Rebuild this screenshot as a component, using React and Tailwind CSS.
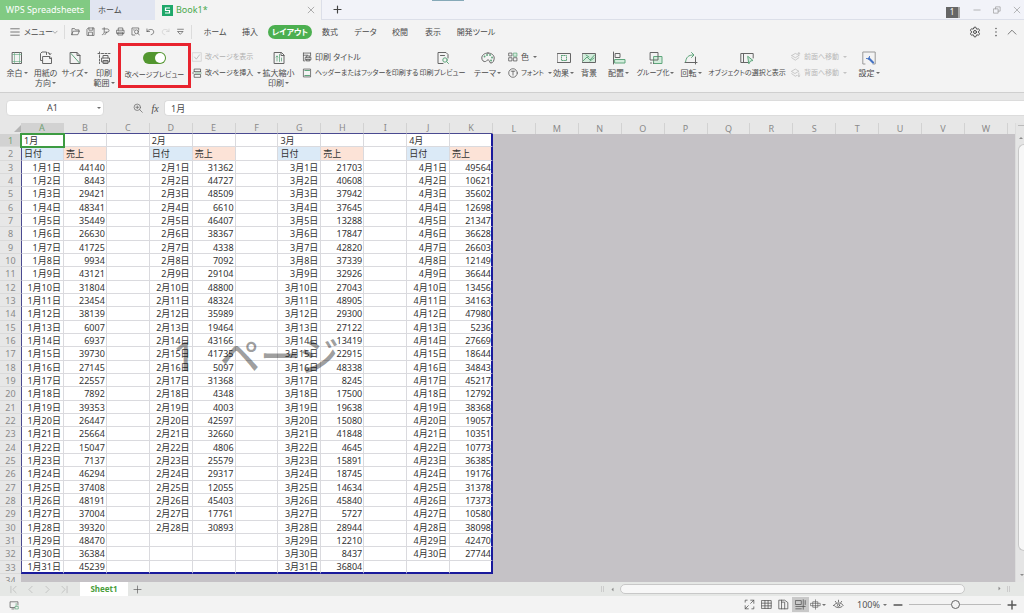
import React from 'react';
import { Settings } from 'lucide-react';

const COLUMNS = 'ABCDEFGHIJKLMNOPQRSTUVW'.split('');

const MONTHS = [
  {
    name: '1月',
    sales: [
      44140, 8443, 29421, 48341, 35449, 26630, 41725, 9934, 43121, 31804, 23454, 38139, 6007, 6937, 39730, 27145,
      22557, 7892, 39353, 26447, 25664, 15047, 7137, 46294, 37408, 48191, 37004, 39320, 48470, 36384, 45239,
    ],
  },
  {
    name: '2月',
    sales: [
      31362, 44727, 48509, 6610, 46407, 38367, 4338, 7092, 29104, 48800, 48324, 35989, 19464, 43166, 41735, 5097,
      31368, 4348, 4003, 42597, 32660, 4806, 25579, 29317, 12055, 45403, 17761, 30893,
    ],
  },
  {
    name: '3月',
    sales: [
      21703, 40608, 37942, 37645, 13288, 17847, 42820, 37339, 32926, 27043, 48905, 29300, 27122, 13419, 22915, 48338,
      8245, 17500, 19638, 15080, 41848, 4645, 15891, 18745, 14634, 45840, 5727, 28944, 12210, 8437, 36804,
    ],
  },
  {
    name: '4月',
    sales: [
      49564, 10621, 35602, 12698, 21347, 36628, 26603, 12149, 36644, 13456, 34163, 47980, 5236, 27669, 18644, 34843,
      45217, 12792, 38368, 19057, 10351, 10773, 36385, 19176, 31378, 17373, 10580, 38098, 42470, 27744,
    ],
  },
];

const cellAt = (row, col) => {
  const month = MONTHS[Math.floor(col / 3)];
  const part = col % 3;
  if (part === 2) return '';
  if (row === 0) return part === 0 ? month.name : '';
  if (row === 1) return part === 0 ? '日付' : '売上';
  const value = month.sales[row - 2];
  if (value === undefined) return '';
  return part === 0 ? `${month.name}${row - 1}日` : value;
};

const Icon = ({ children, className = 'size-[14px] text-[#666]' }) => (
  <svg
    className={`shrink-0 ${className}`}
    viewBox="0 0 14 14"
    fill="none"
    stroke="currentColor"
    strokeLinecap="round"
    strokeLinejoin="round"
    aria-hidden="true"
  >
    {children}
  </svg>
);

const GREEN = '#5fa67c';
const MINT = '#d3ecdc';

const icons = {
  margins: (
    <>
      <path d="M2.5 1.5h9v11h-9z" />
      <path d="M4.5 1.5v11M9.5 1.5v11M2.5 3.5h9M2.5 10.5h9" stroke={GREEN} strokeWidth=".6" />
    </>
  ),
  orientation: (
    <>
      <path d="M3.5 9.5h-2v-7l1.500-1.500h4.500v2.500M9 1.500q2 0 2 2M10 2.500l1 1 1-1" />
      <path d="M4 5.500h7l1.500 1.500v5.500H4zM10.500 5.500v2h2" fill="#f3f3f3" />
    </>
  ),
  size: (
    <>
      <path d="M2.500 1.500h6.500l3 3v8H2.500zM9 1.500v3h3" />
      <path d="M3 2.500l8.500 9.500" stroke={GREEN} />
    </>
  ),
  printArea: (
    <>
      <path d="M2.500 1v11.500M1 2.500h12" strokeDasharray="2 1.500" />
      <path d="M6 7V4.500h5V7M5 7h7.500v4H5zM6.500 9.500h4.500v3H6.500z" fill="#f3f3f3" />
    </>
  ),
  scale: (
    <>
      <path d="M2.500 1.500h7l2.500 2.500v8.500H2.500zM9 1.500v3h3" />
      <path d="M5 5v5M7.500 3.500v7M9.500 7v3M4 6l1-1 1 1" stroke={GREEN} strokeWidth=".8" />
    </>
  ),
  titles: (
    <>
      <path d="M2 1.500h10M2 1.500v11h2M2 4.500h6M12 1.500v4" />
      <path d="M6 7.500V5.500h5v2M5 7.500h7.500v3.500H5zM6.500 10h4.500v2.500H6.500z" fill="#f3f3f3" />
    </>
  ),
  headerFooter: (
    <>
      <path d="M2.500 1.500h9.500v11H2.500z" />
      <path d="M4 3.500h6.500M4 10.500h6.500" stroke={GREEN} strokeWidth="1.600" />
    </>
  ),
  preview: (
    <>
      <path d="M12 7V3.500l-2-2H2v11h5M4.500 4.500h4" />
      <circle cx="9" cy="9" r="2.200" stroke={GREEN} />
      <path d="M10.700 10.700l1.800 1.800" stroke={GREEN} />
    </>
  ),
  theme: (
    <>
      <path d="M7 2C3 2 .8 4.500.8 7s2 4 3.700 3.500S6 8.500 7.500 9s.5 3 2.500 3 3.200-2.500 3.200-5S11 2 7 2z" />
      <path d="M3.500 5.500h.1M6 4h.1M9 4h.1M11 6.500h.1M10 9.500h.1" stroke={GREEN} strokeWidth="1.800" />
    </>
  ),
  colors: (
    <>
      <path d="M1.500 1.500h4v4h-4zM1.500 8h4v4.500h-4zM8 8h4.500v4.500H8z" />
      <path d="M8 1.500h4.500v4.500H8z" fill={MINT} stroke={GREEN} />
    </>
  ),
  fonts: (
    <>
      <circle cx="7" cy="7" r="6" />
      <path d="M4.500 4.500h5M7 4.500v5.500" />
    </>
  ),
  effects: (
    <>
      <path d="M.5 2.500h13v9H.5z" />
      <path d="M4.500 4.500h5v5h-5z" stroke={GREEN} strokeDasharray="1 1.200" />
    </>
  ),
  background: (
    <>
      <path d="M.5 2.500h13v9H.5z" fill={MINT} />
      <path d="M1 10l4-4 3 3 4.500-5M4 4l3 2M8 10l4-3" stroke={GREEN} />
    </>
  ),
  align: (
    <>
      <path d="M1.500 1v12M3.500 2.500h4.500v4H3.500z" />
      <path d="M3 8.500h10v3.500H3z" fill={MINT} stroke={GREEN} />
    </>
  ),
  group: (
    <>
      <path d="M5 5.500h8v7H5z" fill={MINT} stroke={GREEN} />
      <path d="M1.500 1.500h7.500v7.500H1.500z" />
      <path d="M1.500 12h1M4.500 12v.5" />
    </>
  ),
  rotate: (
    <>
      <path d="M1.500 11.500C2 6 4.500 4 9 4M7.500 1.500L10 4 7.500 6.500" stroke={GREEN} />
      <path d="M1 11.500h12M11.500 6v7" />
    </>
  ),
  selectPane: (
    <>
      <path d="M8 11.500H.8v-9h12.400V7M3.500 2.500v9" />
      <path d="M8 5.500l5 4-2.500.5L9 12.500z" fill={MINT} stroke={GREEN} />
    </>
  ),
  forward: (
    <path d="M1 5l5-3 3 1.500M1 5l5 3 5-3M1 8l5 3.500L11 8M11 1v4M9.500 2.500L11 1l1.500 1.500" />
  ),
  backward: (
    <path d="M1 4.500l5-3 5 3-5 3zM1 8l5 3.500 2-1M11 7v5M9.500 10.500L11 12l1.500-1.500" />
  ),
  settings: (
    <>
      <path d="M3 13H.8V1h12.400v12H11" stroke="#999" />
      <path d="M7 7.500l4 4" stroke="#4573c4" strokeWidth="2.200" />
      <path d="M4.500 7.500l2.500.5.5-2.500" stroke="#4573c4" />
    </>
  ),
  breaks: (
    <>
      <path d="M3 5V1.500h9V5M3 5h9M3 12.500V9h9v3.500zM.8 7h1.500" />
      <path d="M4.500 7H13" stroke={GREEN} />
    </>
  ),
  open: <path d="M1.500 12V2.500h4L7 4.500h5.500v2M1.500 12h9l2.500-5.500H4z" />,
  save: <path d="M1.500 12.500v-9l2-2h9v11zM4.500 1.500v3.500h6V1.500M4 12.500V8h6v4.500" />,
  exportPdf: <path d="M2 3h7.500c4 0 4 5 0 5H6M5 1v7c0 4-3 4-3 4M9 8l-3 4" />,
  print: <path d="M3.500 5V1.500h7V5M1.500 5h11v5h-11zM3.500 8h7v4.500h-7z" />,
  printPreview: (
    <>
      <path d="M12 5V1.500H1.500v11H6M4 4.500h1" />
      <circle cx="8.500" cy="7.500" r="3" />
      <path d="M10.700 9.700l2.300 2.800" />
    </>
  ),
  undo: <path d="M1.500 3v4h4M1.500 7C4 2.500 12.500 2.500 12 8c-.3 2.500-2 3.500-4 4" />,
  redo: <path d="M12.500 3v4h-4M12.500 7C10 2.500 1.500 2.500 2 8c.3 2.500 2 3.500 4 4" />,
  more: <path d="M2.500 3.500h9M3 7h8l-4 4z" />,
  hamburger: <path d="M1 2.500h12M1 7h12M1 11.500h12" />,
  chevronDown: <path d="M2 5l5 5 5-5" />,
  chevronUp: <path d="M1.500 10L7 4.500l5.500 5.500" />,
  dots: <path d="M7 2v.1M7 7v.1M7 12v.1" strokeWidth="2" />,
  close: <path d="M2 2l10 10M12 2L2 12" />,
  plus: <path d="M7 1.500v11M1.500 7h11" />,
  minus: <path d="M1.500 7h11" />,
  restore: <path d="M1.500 5h7.500v7.500H1.500zM4.500 5V1.500h8V9H9" />,
  lens: (
    <>
      <circle cx="6" cy="6" r="4.500" />
      <path d="M9.500 9.500l3.500 3.500M4 6h4M6 4v4" />
    </>
  ),
  first: <path d="M3 2v10M11 2L6 7l5 5" />,
  prev: <path d="M9.500 2l-5 5 5 5" />,
  next: <path d="M4.500 2l5 5-5 5" />,
  last: <path d="M11 2v10M3 2l5 5-5 5" />,
  fullscreen: <path d="M8.500 1.500h4v4M12.500 1.500l-4 4M5.500 12.500h-4v-4M1.500 12.500l4-4M1.500 4V1.500H4M12.500 10v2.500H10" />,
  gridView: <path d="M1 2h12v10H1zM1 5.300h12M1 8.700h12M5 2v10M9 2v10" />,
  pageView: <path d="M1.500 1.500h7l4 3v8h-11zM4.500 1.500v11M4.500 4h4v8.500" />,
  breakView: <path d="M1 2h7v5H1zM10.500 1v12M1 9.500h12M1 12.500h7M13 2v5" />,
  target: <path d="M4 3.500h6v7H4zM1 5.500h12v3H1zM7 1v12" strokeWidth=".8" />,
  eye: (
    <>
      <path d="M1 8c3-4 9-4 12 0-3 4-9 4-12 0zM3 3l1 1.500M7 1.500v2M11 3l-1 1.500" />
      <circle cx="7" cy="8" r="1.500" />
    </>
  ),
  record: (
    <>
      <path d="M8 10.500H1.500v-8h11V7M4 12.500h3" />
      <path d="M9 9h4v3.500H9zM10 5v3" stroke={GREEN} />
    </>
  ),
};

const Caret = () => (
  <svg className="ml-px size-[4px] shrink-0 opacity-80" viewBox="0 0 4 4" fill="currentColor" aria-hidden="true">
    <path d="M0 1h4L2 3z" />
  </svg>
);

const BigButton = ({ icon, lines, caret, width, size = 'text-[8px]' }) => (
  <button className={`flex shrink-0 flex-col items-center gap-[3px] pt-[8px] ${width} ${size}`}>
    <Icon>{icons[icon]}</Icon>
    <span className="flex flex-col items-center">
      {lines.map((line, i) => (
        <span key={line} className="flex items-center leading-[10px] whitespace-nowrap">
          {line}
          {caret && i === lines.length - 1 && <Caret />}
        </span>
      ))}
    </span>
  </button>
);

const SmallButton = ({ icon, label, caret, disabled, size = 'text-[8px]' }) => (
  <button
    disabled={disabled}
    className={`flex h-[16px] items-center gap-[3px] whitespace-nowrap disabled:text-[#b8b8b8] ${size}`}
  >
    <Icon className="size-[10px]">{icons[icon]}</Icon>
    <span>{label}</span>
    {caret && <Caret />}
  </button>
);

const TitleBar = () => (
  <header className="relative flex h-[20px] shrink-0 border-b border-[#dcdfe9] bg-[#f2f3f9]">
    <div className="absolute top-0 left-[432px] h-px w-[32px] bg-[#86a9b8]" />
    <button className="h-[20px] w-[90px] bg-[#81ca83] text-[9px] text-white">WPS Spreadsheets</button>
    <button className="h-[20px] w-[65px] bg-[#e1e5f1] pl-[8px] text-left text-[8px] text-[#444]">ホーム</button>
    <div className="flex h-[20px] w-[167px] items-center border-r border-[#dcdfe9] bg-[#f3f3f3] pr-[6px] pl-[7px]">
      <svg className="size-[11px]" viewBox="0 0 11 11" fill="none" aria-hidden="true">
        <path d="M0 0h11v11H0z" fill="#1fa86a" />
        <path d="M8 3H3.500v2.500h4V8H3" stroke="#fff" strokeWidth="1.200" />
      </svg>
      <span className="ml-[3px] flex-1 text-[9px] text-[#4aa84d]">Book1*</span>
      <button aria-label="閉じる" className="text-[#777]">
        <Icon className="size-[8px]">{icons.close}</Icon>
      </button>
    </div>
    <button aria-label="新しいタブ" className="ml-[11px] text-[#444]">
      <Icon className="size-[9px]">
        <g strokeWidth="1.800">{icons.plus}</g>
      </Icon>
    </button>
    <div className="ml-auto flex items-center pr-[3px] text-[#888]">
      <span className="mt-[5px] flex h-[11px] w-[14px] items-center justify-center border-r-2 border-[#aaa] bg-[#666] text-[8px] text-white">
        1
      </span>
      <button aria-label="最小化" className="ml-[13px]">
        <Icon className="size-[8px]">{icons.minus}</Icon>
      </button>
      <button aria-label="元に戻す" className="ml-[12px]">
        <Icon className="size-[8px]">{icons.restore}</Icon>
      </button>
      <button aria-label="ウィンドウを閉じる" className="ml-[12px]">
        <Icon className="size-[8px]">{icons.close}</Icon>
      </button>
    </div>
  </header>
);

const QUICK = ['open', 'save', 'exportPdf', 'print', 'printPreview', 'undo', 'redo', 'more'];

const TABS = [
  { label: 'ホーム', width: 'w-[34px]' },
  { label: '挿入', width: 'w-[36px]' },
  { label: 'レイアウト', width: 'w-[44px]', active: true },
  { label: '数式', width: 'w-[36px]' },
  { label: 'データ', width: 'w-[35px]' },
  { label: '校閲', width: 'w-[34px]' },
  { label: '表示', width: 'w-[32px]' },
  { label: '開発ツール', width: 'w-[54px]' },
];

const MenuBar = () => (
  <nav className="flex h-[23px] shrink-0 items-center pl-[10px] text-[8px]">
    <button className="flex items-center whitespace-nowrap">
      <Icon className="size-[10px]">{icons.hamburger}</Icon>
      <span className="ml-[4px] w-[28px] text-left">メニュー</span>
      <Icon className="size-[6px]">{icons.chevronDown}</Icon>
    </button>
    <div className="ml-[6px] h-[14px] w-px bg-[#dcdcdc]" />
    <div className="ml-[6px] flex gap-[6px]">
      {QUICK.map((name) => (
        <button key={name} aria-label={name} className={name === 'redo' ? 'text-[#ccc]' : ''}>
          <Icon className="size-[9px]">{icons[name]}</Icon>
        </button>
      ))}
    </div>
    <div className="ml-[6px] h-[14px] w-px bg-[#dcdcdc]" />
    <div className="ml-[6px] flex items-center">
      {TABS.map(({ label, width, active }) => (
        <button
          key={label}
          className={`h-[14px] shrink-0 rounded-full leading-[14px] whitespace-nowrap ${width} ${
            active ? 'bg-[#4caf50] font-bold text-white' : ''
          }`}
        >
          {label}
        </button>
      ))}
    </div>
    <div className="ml-auto flex items-center pr-[7px]">
      <button aria-label="設定">
        <Settings className="size-[12px]" />
      </button>
      <button aria-label="その他" className="ml-[10px]">
        <Icon className="size-[10px]">{icons.dots}</Icon>
      </button>
      <button aria-label="リボンを折りたたむ" className="ml-[6px]">
        <Icon className="size-[10px]">{icons.chevronUp}</Icon>
      </button>
    </div>
  </nav>
);

const Ribbon = () => (
  <div className="flex h-[50px] shrink-0 border-b border-[#cfcfcf] pl-[3px]">
    <BigButton icon="margins" lines={['余白']} caret width="w-[28px]" />
    <BigButton icon="orientation" lines={['用紙の', '方向']} caret width="w-[29px]" />
    <BigButton icon="size" lines={['サイズ']} caret width="w-[30px]" />
    <BigButton icon="printArea" lines={['印刷', '範囲']} caret width="w-[28px]" />
    <label className="flex h-[45px] w-[73px] shrink-0 flex-col items-center gap-[6px] border-[3px] border-[#e8232e] pt-[6px] text-[7px] whitespace-nowrap">
      <input type="checkbox" defaultChecked className="sr-only" />
      <span className="flex h-[12px] w-[23px] justify-end rounded-full bg-[#52962f] p-px">
        <span className="size-[10px] rounded-full bg-white" />
      </span>
      <span className="leading-[10px]">改ページプレビュー</span>
    </label>
    <div className="flex w-[71px] shrink-0 flex-col pt-[6px] pl-px">
      <label className="flex h-[16px] items-center gap-[3px] text-[7px] whitespace-nowrap text-[#b0b0b0]">
        <input type="checkbox" disabled defaultChecked className="sr-only" />
        <Icon className="size-[10px]">
          <path d="M1 1h12v12H1z" stroke="#ccc" />
          <path d="M3.500 7l2.500 3 4.500-6" stroke="#aaa" />
        </Icon>
        改ページを表示
      </label>
      <SmallButton icon="breaks" label="改ページを挿入" caret size="text-[7px]" />
    </div>
    <BigButton icon="scale" lines={['拡大縮小', '印刷']} caret width="w-[33px]" />
    <div className="ml-[7px] w-[116px] shrink-0 pt-[6px]">
      <SmallButton icon="titles" label="印刷 タイトル" />
      <SmallButton icon="headerFooter" label="ヘッダーまたはフッターを印刷する" size="text-[7px]" />
    </div>
    <BigButton icon="preview" lines={['印刷プレビュー']} width="w-[49px]" size="text-[7px]" />
    <BigButton icon="theme" lines={['テーマ']} caret width="w-[41px]" />
    <div className="w-[42px] shrink-0 pt-[6px]">
      <SmallButton icon="colors" label="色" caret />
      <SmallButton icon="fonts" label="フォント" caret size="text-[7px]" />
    </div>
    <BigButton icon="effects" lines={['効果']} caret width="w-[27px]" />
    <BigButton icon="background" lines={['背景']} width="w-[24px]" />
    <BigButton icon="align" lines={['配置']} caret width="w-[35px]" />
    <BigButton icon="group" lines={['グループ化']} caret width="w-[39px]" size="text-[7px]" />
    <BigButton icon="rotate" lines={['回転']} caret width="w-[32px]" />
    <BigButton icon="selectPane" lines={['オブジェクトの選択と表示']} width="w-[80px]" size="text-[7px]" />
    <div className="ml-[4px] w-[61px] shrink-0 pt-[6px]">
      <SmallButton icon="forward" label="前面へ移動" caret disabled size="text-[7px]" />
      <SmallButton icon="backward" label="背面へ移動" caret disabled size="text-[7px]" />
    </div>
    <BigButton icon="settings" lines={['設定']} caret width="w-[34px]" />
  </div>
);

const FormulaBar = () => (
  <div className="flex h-[30px] shrink-0 items-center bg-[#e7e7e7]">
    <button className="ml-[6px] flex h-[16px] w-[98px] items-center rounded-sm border border-[#dcdcdc] bg-white px-[2px] text-[9px]">
      <span className="flex-1 text-center">A1</span>
      <Caret />
    </button>
    <button aria-label="検索" className="ml-[29px] text-[#666]">
      <Icon className="size-[10px]">{icons.lens}</Icon>
    </button>
    <button className="ml-[5px] w-[14px] font-['Liberation_Serif',serif] text-[10px] italic">fx</button>
    <input
      aria-label="数式バー"
      defaultValue="1月"
      className="ml-[2px] h-[16px] min-w-0 flex-1 rounded-l-sm border border-r-0 border-[#dcdcdc] bg-white pl-[6px] text-[9px] outline-none"
    />
  </div>
);

const fillFor = (row, col) => {
  if (row !== 1 || col % 3 === 2) return 'bg-white';
  return col % 3 === 0 ? 'bg-[#dbeaf7]' : 'bg-[#fce3d7]';
};

const edgeFor = (row, col) => {
  const right = col === 10 ? 'border-r-2 border-r-[#1a1a9c]' : 'border-r border-r-[#dadade]';
  const bottom = row === 32 ? 'border-b-2 border-b-[#1a1a9c]' : 'border-b border-b-[#dadade]';
  const left = col === 0 ? 'border-l border-l-[#4a4a90]' : '';
  return `${right} ${bottom} ${left}`;
};

const Sheet = () => (
  <div className="relative min-w-0 flex-1 overflow-hidden bg-[#c5c2c6] text-[#333]">
    <table className="w-full table-fixed border-separate border-spacing-0 text-[9px] leading-[11px]">
      <thead>
        <tr className="h-[11px] leading-[10px] text-[#8a8a8a]">
          <th className="w-[21px] bg-[#e7e7e7] p-0">
            <svg className="ml-auto size-[7px]" viewBox="0 0 7 7" aria-hidden="true">
              <path d="M7 0v7H0z" fill="#b5b5b5" />
            </svg>
          </th>
          {COLUMNS.map((name, i) => (
            <th
              key={name}
              className={`border-r border-r-[#d2d2d2] p-0 font-normal ${
                i === 0 ? 'bg-[#d2d2d2] text-[#6f9f72]' : 'bg-[#e7e7e7]'
              } ${i < 11 ? 'border-b border-b-[#4a4a90]' : ''}`}
            >
              {name}
            </th>
          ))}
          <th className="w-[7px] bg-[#e7e7e7] p-0" />
        </tr>
      </thead>
      <tbody>
        {Array.from({ length: 33 }, (_, row) => (
          <tr key={row} className={row % 3 === 1 ? 'h-[14px]' : 'h-[13px]'}>
            <th
              className={`border-b border-b-[#dadada] p-0 text-center font-normal ${
                row === 0 ? 'bg-[#d2d2d2] text-[#6f9f72]' : 'bg-[#e7e7e7] text-[#8a8a8a]'
              }`}
            >
              {row + 1}
            </th>
            {COLUMNS.slice(0, 11).map((name, col) => (
              <td
                key={name}
                className={`py-0 pl-[2px] whitespace-nowrap ${fillFor(row, col)} ${edgeFor(row, col)} ${
                  row > 1 ? 'text-right' : 'text-left'
                } ${col === 10 ? 'pr-0' : col % 3 === 0 ? 'pr-[2px]' : 'pr-px'} ${
                  row === 0 && col === 0 ? 'outline-2 -outline-offset-1 outline-[#3d9b42]' : ''
                }`}
              >
                {cellAt(row, col)}
              </td>
            ))}
            <td colSpan={13} className="p-0" />
          </tr>
        ))}
        <tr className="h-[13px]">
          <th className="bg-[#e7e7e7] p-0 text-center font-normal text-[#8a8a8a]">34</th>
          <td colSpan={24} className="p-0" />
        </tr>
      </tbody>
    </table>
    <div className="pointer-events-none absolute top-[203px] left-[173px] flex gap-[24px] text-[40px] leading-[60px] font-medium text-black/40">
      <span>1</span>
      <span>ページ</span>
    </div>
  </div>
);

const VerticalScroll = () => (
  <div className="flex w-[9px] shrink-0 flex-col items-center border-l border-[#dcdcdc] bg-[#e5e5e5] pl-[2px] text-[#777]">
    <div className="mt-[2px] h-[8px] w-full border-t border-[#bbb]" />
    <button aria-label="上へ" className="h-[11px] rotate-180">
      <Caret />
    </button>
    <div className="h-[407px] w-full rounded-l-md border border-r-0 border-[#c8c8c8] bg-[#f7f7f7]" />
    <button aria-label="下へ" className="mt-auto h-[14px]">
      <Caret />
    </button>
  </div>
);

const SheetTabs = () => (
  <div className="flex h-[14px] shrink-0 items-center bg-[#e5e7e5] text-[#b0b0b0]">
    <div className="flex gap-[8px] pl-[9px]">
      {['first', 'prev', 'next', 'last'].map((name) => (
        <button key={name} aria-label={name}>
          <Icon className="size-[9px]">{icons[name]}</Icon>
        </button>
      ))}
    </div>
    <button className="ml-[11px] h-[14px] w-[48px] bg-white text-[8px] font-bold text-[#4a9e3c]">Sheet1</button>
    <button aria-label="シートを追加" className="ml-[5px] text-[#555]">
      <Icon className="size-[9px]">{icons.plus}</Icon>
    </button>
    <div className="ml-auto flex w-[423px] items-center text-[#777]">
      <div className="h-[6px] w-[3px] border-x border-[#ccc]" />
      <button aria-label="左へ" className="ml-[6px] rotate-90">
        <Caret />
      </button>
      <div className="ml-[5px] h-[10px] flex-1 rounded-full border border-[#c8c8c8] bg-[#f7f7f7]" />
      <button aria-label="右へ" className="ml-[32px] -rotate-90">
        <Caret />
      </button>
      <div className="mr-[14px] ml-[5px] h-[6px] w-[3px] border-x border-[#ccc]" />
    </div>
  </div>
);

const VIEWS = ['fullscreen', 'gridView', 'pageView', 'breakView', 'target', 'eye'];

const StatusBar = () => (
  <footer className="flex h-[17px] shrink-0 items-center pl-[9px] text-[#555]">
    <Icon className="size-[10px]">{icons.record}</Icon>
    <div className="ml-auto flex">
      {VIEWS.map((name) => (
        <button
          key={name}
          aria-label={name}
          className={`flex h-[15px] w-[17px] items-center justify-center ${name === 'breakView' ? 'bg-[#c9c9c9]' : ''} ${
            name === 'eye' ? 'ml-[4px]' : ''
          }`}
        >
          <Icon className="size-[11px]">{icons[name]}</Icon>
          {name === 'target' && <Caret />}
        </button>
      ))}
    </div>
    <button className="ml-[10px] flex w-[30px] items-center justify-between text-[9px]">
      100%
      <Caret />
    </button>
    <button aria-label="縮小" className="ml-[6px]">
      <Icon className="size-[10px]">
        <g strokeWidth="2">{icons.minus}</g>
      </Icon>
    </button>
    <div className="mx-[6px] flex w-[92px] items-center">
      <input
        type="range"
        aria-label="ズーム"
        defaultValue="50"
        className="h-px w-full appearance-none bg-[#bbb] [&::-webkit-slider-thumb]:size-[9px] [&::-webkit-slider-thumb]:appearance-none [&::-webkit-slider-thumb]:rounded-full [&::-webkit-slider-thumb]:border [&::-webkit-slider-thumb]:border-solid [&::-webkit-slider-thumb]:border-[#666] [&::-webkit-slider-thumb]:bg-[#f3f3f3]"
      />
    </div>
    <button aria-label="拡大" className="mr-[7px]">
      <Icon className="size-[10px]">
        <g strokeWidth="2">{icons.plus}</g>
      </Icon>
    </button>
  </footer>
);

const App = () => (
  <div className="flex h-screen flex-col overflow-hidden bg-[#f3f3f3] font-['Noto_Sans','Noto_Sans_CJK_JP',sans-serif] text-[#4a4a4a]">
    <TitleBar />
    <div className="shrink-0 [font-feature-settings:'palt']">
      <MenuBar />
      <Ribbon />
    </div>
    <FormulaBar />
    <main className="flex min-h-0 flex-1">
      <Sheet />
      <VerticalScroll />
    </main>
    <SheetTabs />
    <StatusBar />
  </div>
);

export default App;
